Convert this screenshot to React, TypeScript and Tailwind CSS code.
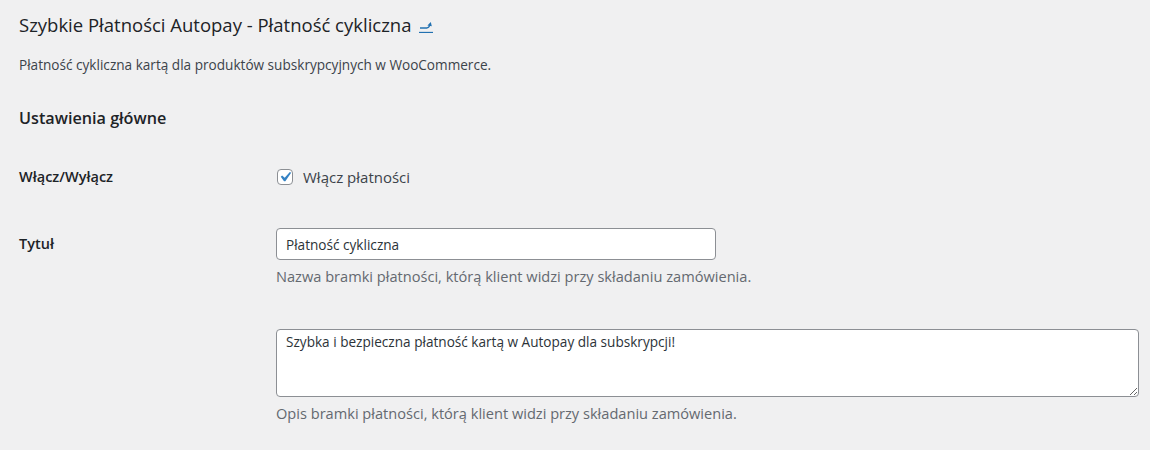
import React from 'react';

const font = { fontFamily: '"Open Sans", "Noto Sans", sans-serif' };

function CheckMark() {
  return (
    <svg viewBox="0 0 20 20" className="w-[20px] h-[20px] -m-[3px]">
      <path d="M14.83 4.89l1.34.94-5.81 8.38H9.02L5.78 9.67l1.34-1.25 2.57 2.4z" fill="#3582c4" />
    </svg>
  );
}

// Little "back to payments" arrow after the gateway title
function BackLink() {
  return (
    <a className="inline-flex flex-col items-start ml-[8px] self-center mt-[2px]" aria-label="Powrót do płatności">
      <svg viewBox="0 0 14 14" className="w-[14px] h-[14px]">
        <path d="M1 9h6.8c1.5 0 2.4-1 2.9-2.8" fill="none" stroke="#2271b1" strokeWidth="1.3" />
        <path d="M8.4 6.4l3.4-3.4 1 4.3z" fill="#2271b1" />
        <path d="M0 13.5h14" stroke="#2271b1" strokeWidth="1.3" />
      </svg>
    </a>
  );
}

export default function App() {
  return (
    <div className="min-h-[450px] w-[1150px] bg-[#f0f0f1] text-[#1d2327] pl-[19px] pt-[12px]" style={font}>
      {/* Heading */}
      <h2 className="text-[18.5px] leading-[26px] font-medium text-[#1d2327] flex items-center">
        Szybkie Płatności Autopay - Płatność cykliczna
        <BackLink />
      </h2>
      <p className="mt-[17px] text-[13.6px] leading-[20px] text-[#3c434a]">
        Płatność cykliczna kartą dla produktów subskrypcyjnych w WooCommerce.
      </p>

      <h3 className="mt-[31px] text-[16.2px] leading-[24px] font-semibold text-[#1d2327]">Ustawienia główne</h3>

      {/* Form rows */}
      <div className="mt-[27px] grid grid-cols-[257px_1fr]">
        {/* Enable */}
        <div className="h-[40px] flex items-center text-[14.5px] font-semibold">Włącz/Wyłącz</div>
        <div className="h-[40px] flex items-center">
          <label className="flex items-center gap-[10px] text-[15px] text-[#3c434a] ml-[1px]">
            <span className="w-[16px] h-[16px] border border-[#8c8f94] rounded-[4px] bg-white flex items-center justify-center">
              <CheckMark />
            </span>
            Włącz płatności
          </label>
        </div>

        {/* Title */}
        <div className="mt-[31px] h-[32px] flex items-center text-[14.5px] font-semibold">Tytuł</div>
        <div className="mt-[31px]">
          <input
            defaultValue="Płatność cykliczna"
            className="w-[440px] h-[32px] px-[9px] border border-[#8c8f94] rounded-[4px] bg-white text-[13.6px] text-[#2c3338] outline-none"
            style={font}
          />
          <p className="mt-[6px] text-[14.6px] leading-[20px] text-[#646970]">
            Nazwa bramki płatności, którą klient widzi przy składaniu zamówienia.
          </p>
        </div>

        {/* Description */}
        <div className="mt-[43px]" />
        <div className="mt-[43px] pr-[12px]">
          <textarea
            defaultValue="Szybka i bezpieczna płatność kartą w Autopay dla subskrypcji!"
            className="block w-[863px] h-[68px] px-[9px] py-[2px] border border-[#8c8f94] rounded-[4px] bg-white text-[13.6px] leading-[20px] text-[#2c3338] outline-none resize-y"
            style={font}
          />
          <p className="mt-[6px] text-[14.6px] leading-[20px] text-[#646970]">
            Opis bramki płatności, którą klient widzi przy składaniu zamówienia.
          </p>
        </div>
      </div>
    </div>
  );
}
